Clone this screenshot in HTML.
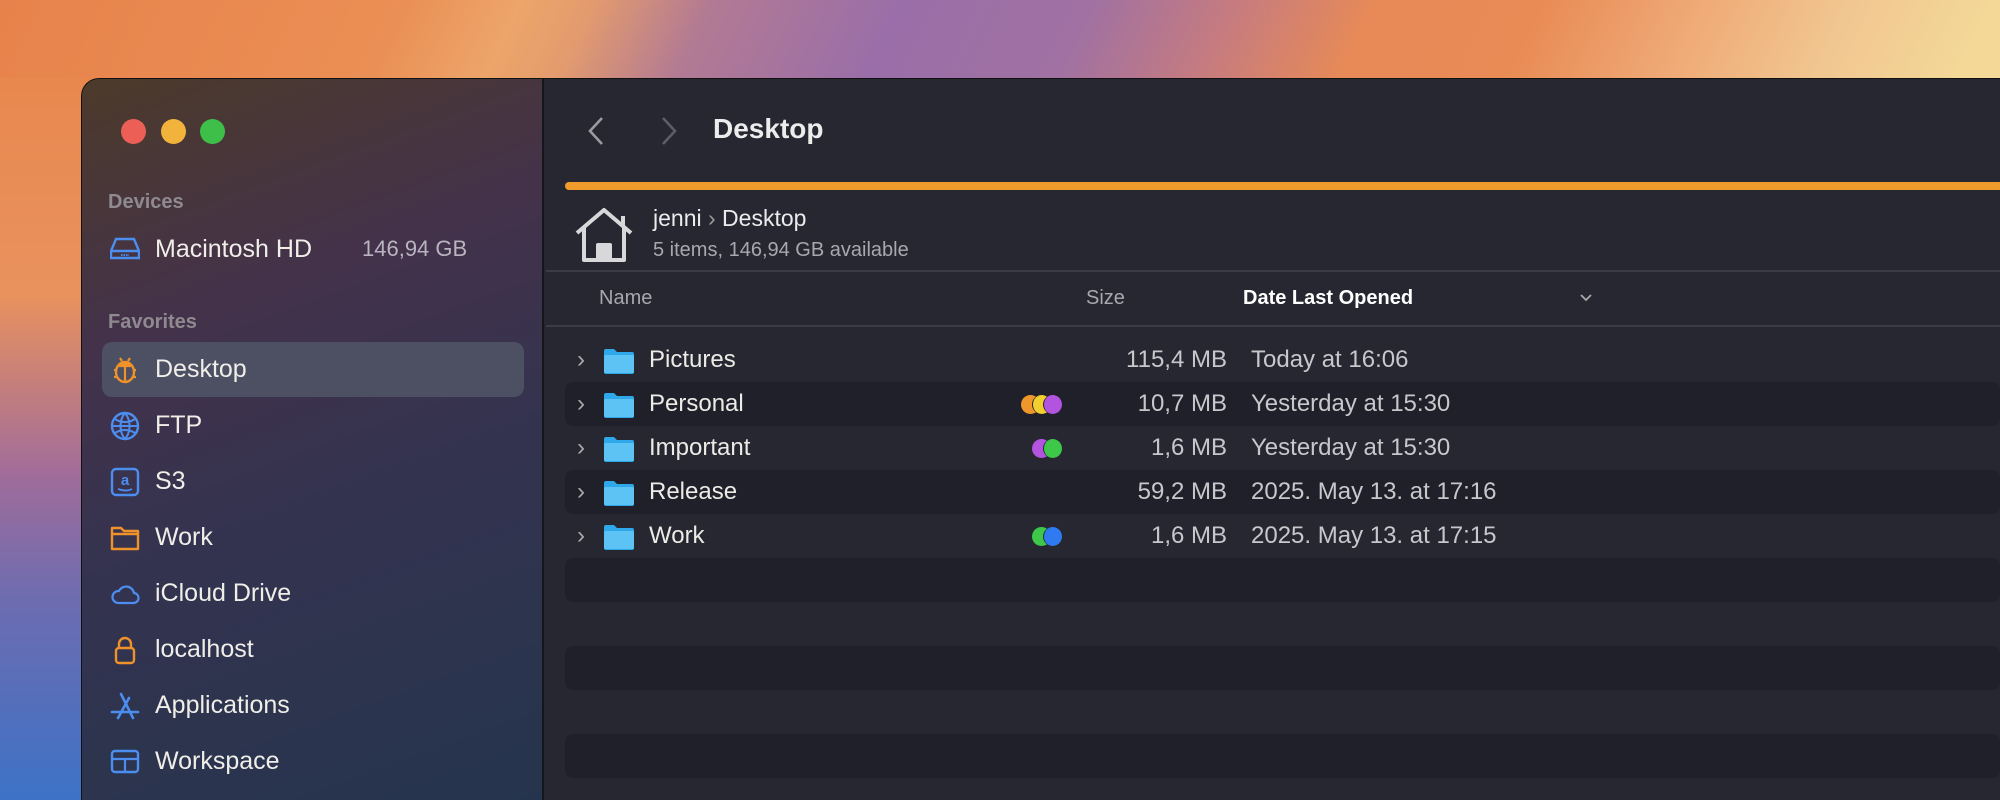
<!DOCTYPE html>
<html style="width:2000px;height:800px;overflow:hidden"><head><meta charset="utf-8">
<style>
*{margin:0;padding:0;box-sizing:border-box}
body{width:2000px;height:800px;overflow:hidden;position:relative;font-family:"Liberation Sans",sans-serif;
background:linear-gradient(115deg,#e8824c 0%,#ea8f55 17%,#eda56a 22%,#e39b6e 25%,#b27a93 30%,#9a6ea8 38%,#a071a2 46%,#c57b80 52%,#e78a58 58%,#e98b55 65%,#efab78 72%,#f1c690 78%,#f3d898 84%,#f2dba0 100%);}
.bl{position:absolute;left:0;top:78px;width:90px;height:722px;background:linear-gradient(180deg,#e8884f 0%,#e9925e 30%,#a06c9a 55%,#6e6cb0 72%,#3d72c6 100%)}
.win{position:absolute;left:81px;top:78px;width:1919px;height:722px;border-radius:18px 0 0 0;overflow:hidden;background:#262731;border:1px solid #111;border-right:none;border-bottom:none}
.side{position:absolute;left:0;top:0;width:462px;height:100%;background:linear-gradient(160deg,#4c3a2a 0%,#44324a 30%,#35334f 55%,#25344e 100%);border-right:2px solid #15161c}
.tl{position:absolute;top:40px;width:25px;height:25px;border-radius:50%}
.sec{position:absolute;left:26px;font-size:20px;font-weight:bold;color:#8e8a90}
.it{position:absolute;left:0;width:462px;height:56px;color:#f0eee8;font-size:25px;line-height:56px}
.it .t{position:absolute;left:73px}
.it svg{position:absolute;left:28px;top:14px}
.sel{position:absolute;left:20px;top:263px;width:422px;height:55px;border-radius:10px;background:#4c5062}
.main{position:absolute;left:464px;top:0;right:0;height:100%}
.row{position:absolute;left:19px;right:0;height:44px;font-size:24px;color:#ecebe6;line-height:44px}
.stripe{background:#1f2029;border-radius:8px}
.chev{position:absolute;left:12px;top:0;color:#aaa}
.fold{position:absolute;left:38px;top:10px}
.nm{position:absolute;left:84px}
.sz{position:absolute;left:360px;width:302px;text-align:right;color:#c8c8cc}
.dt{position:absolute;left:686px;color:#c8c8cc}
.dot{position:absolute;top:13px;width:19px;height:19px;border-radius:50%}
</style></head><body>
<div class="bl"></div>
<div class="win">
 <div class="side">
  <div class="tl" style="left:39px;background:#ec5f57"></div>
  <div class="tl" style="left:79px;background:#f1b33b"></div>
  <div class="tl" style="left:118px;background:#3ebf4a"></div>
  <div class="sec" style="top:112px">Devices</div>
  <div class="it" style="top:142px"><svg width="30" height="28" viewBox="0 0 30 28"><path d="M6 4h18l5 12v7H1v-7z M1 16h28" fill="none" stroke="#4b8ef0" stroke-width="2.4"/><path d="M11 20h8" stroke="#4b8ef0" stroke-width="2" stroke-dasharray="1.5 1"/></svg><span class="t">Macintosh HD</span><span style="position:absolute;left:280px;color:#b8b4c0;font-size:22px">146,94 GB</span></div>
  <div class="sec" style="top:232px">Favorites</div>
  <div class="sel"></div>
  <div class="it" style="top:262px"><svg width="30" height="30" viewBox="0 0 30 30"><ellipse cx="15" cy="17" rx="9" ry="10" fill="none" stroke="#f0922a" stroke-width="2.4"/><path d="M9 11h12M15 11v16M4 15h3M23 15h3M4 22h3M23 22h3M10 3l2 3M20 3l-2 3" stroke="#f0922a" stroke-width="2.2"/><path d="M9 11a6 5 0 0 1 12 0z" fill="#f0922a"/></svg><span class="t">Desktop</span></div>
  <div class="it" style="top:318px"><svg width="30" height="30" viewBox="0 0 30 30"><circle cx="15" cy="15" r="13" fill="none" stroke="#4b8ef0" stroke-width="2.4"/><path d="M2 15h26M15 2c-6 7-6 19 0 26M15 2c6 7 6 19 0 26M5 8c6 4 14 4 20 0M5 22c6-4 14-4 20 0" fill="none" stroke="#4b8ef0" stroke-width="2"/></svg><span class="t">FTP</span></div>
  <div class="it" style="top:374px"><svg width="30" height="30" viewBox="0 0 30 30"><rect x="2" y="2" width="26" height="26" rx="4" fill="none" stroke="#4b8ef0" stroke-width="2.4"/><text x="15" y="18" text-anchor="middle" font-size="15" font-weight="bold" fill="#4b8ef0" font-family="Liberation Sans">a</text><path d="M8 22c5 2 10 2 14 0" fill="none" stroke="#4b8ef0" stroke-width="1.8"/></svg><span class="t">S3</span></div>
  <div class="it" style="top:430px"><svg width="30" height="30" viewBox="0 0 30 30"><path d="M2 5h9l3 3h14v18H2z M2 11h26" fill="none" stroke="#f0922a" stroke-width="2.4" stroke-linejoin="round"/></svg><span class="t">Work</span></div>
  <div class="it" style="top:486px"><svg width="30" height="30" viewBox="0 0 30 30"><path d="M8 24h15a5 5 0 0 0 1-10 8 8 0 0 0-15-2A6 6 0 0 0 8 24z" fill="none" stroke="#4b8ef0" stroke-width="2.2"/></svg><span class="t">iCloud Drive</span></div>
  <div class="it" style="top:542px"><svg width="30" height="30" viewBox="0 0 30 30"><rect x="6" y="13" width="18" height="15" rx="3" fill="none" stroke="#f0922a" stroke-width="2.4"/><path d="M9 13V9a6 6 0 0 1 12 0v4" fill="none" stroke="#f0922a" stroke-width="2.4"/></svg><span class="t">localhost</span></div>
  <div class="it" style="top:598px"><svg width="30" height="30" viewBox="0 0 30 30"><path d="M11 3l12 24M19 7L8 27M2 21h26" fill="none" stroke="#4b8ef0" stroke-width="2.6" stroke-linecap="round"/></svg><span class="t">Applications</span></div>
  <div class="it" style="top:654px"><svg width="30" height="30" viewBox="0 0 30 30"><rect x="2" y="4" width="26" height="21" rx="3" fill="none" stroke="#4b8ef0" stroke-width="2.4"/><path d="M2 12h26M15 12v13" stroke="#4b8ef0" stroke-width="2.2"/></svg><span class="t">Workspace</span></div>
 </div>
 <div class="main">
  <svg style="position:absolute;left:40px;top:36px" width="20" height="32" viewBox="0 0 20 32"><path d="M16 3L4 16l12 13" fill="none" stroke="#9a9aa0" stroke-width="2.6"/></svg>
  <svg style="position:absolute;left:113px;top:36px" width="20" height="32" viewBox="0 0 20 32"><path d="M4 3l12 13L4 29" fill="none" stroke="#5c5d66" stroke-width="2.6"/></svg>
  <div style="position:absolute;left:167px;top:34px;font-size:28px;font-weight:bold;color:#ececec">Desktop</div>
  <div style="position:absolute;left:19px;top:103px;right:0;height:8px;background:#f09b2c;border-radius:4px 0 0 4px"></div>
  <svg style="position:absolute;left:27px;top:128px" width="62" height="56" viewBox="0 0 62 56"><path d="M4 26L31 3l27 23M50 19V9M11 21v32h40V21M25 53V38h12v15" fill="none" stroke="#d8d8da" stroke-width="4" stroke-linejoin="round"/><rect x="25" y="38" width="12" height="15" fill="#d8d8da"/></svg>
  <div style="position:absolute;left:107px;top:126px;font-size:23px;color:#ececec">jenni <span style="color:#999">›</span> Desktop</div>
  <div style="position:absolute;left:107px;top:160px;font-size:20px;color:#a8a8ae">5 items, 146,94 GB available</div>
  <div style="position:absolute;left:0;right:0;top:191px;height:2px;background:#3a3b44"></div>
  <div style="position:absolute;left:53px;top:208px;font-size:20px;color:#a8a8ae">Name</div>
  <div style="position:absolute;left:540px;top:208px;font-size:20px;color:#a8a8ae">Size</div>
  <div style="position:absolute;left:697px;top:208px;font-size:20px;font-weight:bold;color:#fff">Date Last Opened</div>
  <svg style="position:absolute;left:1033px;top:214px" width="14" height="10" viewBox="0 0 14 10"><path d="M2 2l5 5 5-5" fill="none" stroke="#aaa" stroke-width="1.8"/></svg>
  <div style="position:absolute;left:0;right:0;top:246px;height:2px;background:#3a3b44"></div>

  <div class="row" style="top:259px"><span class="chev">›</span><svg class="fold" width="32" height="26" viewBox="0 0 32 26"><path d="M1 3a2 2 0 0 1 2-2h8l3 3h15a2 2 0 0 1 2 2v18a2 2 0 0 1-2 2H3a2 2 0 0 1-2-2z" fill="#2ea8e8"/><rect x="1" y="7" width="30" height="18" rx="1.5" fill="#5cc3f4"/></svg><span class="nm">Pictures</span><span class="sz">115,4 MB</span><span class="dt">Today at 16:06</span></div>
  <div class="row stripe" style="top:303px"><span class="chev">›</span><svg class="fold" width="32" height="26" viewBox="0 0 32 26"><path d="M1 3a2 2 0 0 1 2-2h8l3 3h15a2 2 0 0 1 2 2v18a2 2 0 0 1-2 2H3a2 2 0 0 1-2-2z" fill="#2ea8e8"/><rect x="1" y="7" width="30" height="18" rx="1.5" fill="#5cc3f4"/></svg><span class="nm">Personal</span>
   <span class="dot" style="left:456px;background:#f0972c"></span><span class="dot" style="left:467px;background:#f2cf2e;border-left:1px solid #1f2029"></span><span class="dot" style="left:478px;background:#b254e0;border-left:1px solid #1f2029"></span>
   <span class="sz">10,7 MB</span><span class="dt">Yesterday at 15:30</span></div>
  <div class="row" style="top:347px"><span class="chev">›</span><svg class="fold" width="32" height="26" viewBox="0 0 32 26"><path d="M1 3a2 2 0 0 1 2-2h8l3 3h15a2 2 0 0 1 2 2v18a2 2 0 0 1-2 2H3a2 2 0 0 1-2-2z" fill="#2ea8e8"/><rect x="1" y="7" width="30" height="18" rx="1.5" fill="#5cc3f4"/></svg><span class="nm">Important</span>
   <span class="dot" style="left:467px;background:#b254e0"></span><span class="dot" style="left:478px;background:#3ec84a;border-left:1px solid #262731"></span>
   <span class="sz">1,6 MB</span><span class="dt">Yesterday at 15:30</span></div>
  <div class="row stripe" style="top:391px"><span class="chev">›</span><svg class="fold" width="32" height="26" viewBox="0 0 32 26"><path d="M1 3a2 2 0 0 1 2-2h8l3 3h15a2 2 0 0 1 2 2v18a2 2 0 0 1-2 2H3a2 2 0 0 1-2-2z" fill="#2ea8e8"/><rect x="1" y="7" width="30" height="18" rx="1.5" fill="#5cc3f4"/></svg><span class="nm">Release</span><span class="sz">59,2 MB</span><span class="dt">2025. May 13. at 17:16</span></div>
  <div class="row" style="top:435px"><span class="chev">›</span><svg class="fold" width="32" height="26" viewBox="0 0 32 26"><path d="M1 3a2 2 0 0 1 2-2h8l3 3h15a2 2 0 0 1 2 2v18a2 2 0 0 1-2 2H3a2 2 0 0 1-2-2z" fill="#2ea8e8"/><rect x="1" y="7" width="30" height="18" rx="1.5" fill="#5cc3f4"/></svg><span class="nm">Work</span>
   <span class="dot" style="left:467px;background:#3ec84a"></span><span class="dot" style="left:478px;background:#2f7af0;border-left:1px solid #262731"></span>
   <span class="sz">1,6 MB</span><span class="dt">2025. May 13. at 17:15</span></div>
  <div class="row stripe" style="top:479px"></div>
  <div class="row stripe" style="top:567px"></div>
  <div class="row stripe" style="top:655px"></div>
 </div>
</div>
</body></html>
